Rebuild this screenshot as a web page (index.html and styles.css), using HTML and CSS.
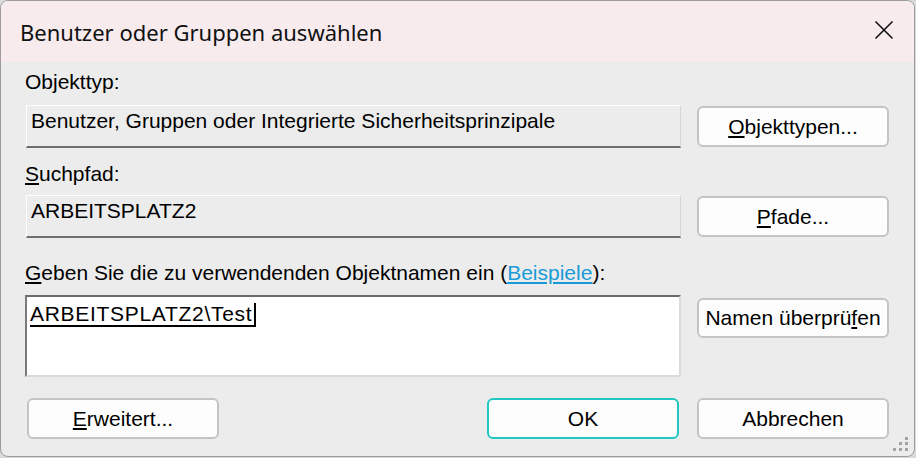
FILE: index.html
```html
<!DOCTYPE html>
<html lang="de">
<head>
<meta charset="utf-8">
<title>Benutzer oder Gruppen auswählen</title>
<link rel="stylesheet" href="styles.css">
</head>
<body>
<div class="window">
  <div class="titlebar">
    <span class="title">Benutzer oder Gruppen auswählen</span>
    <span class="close">
      <svg width="20" height="20" viewBox="0 0 20 20"><path d="M1.5 1.5 L18.5 18.5 M18.5 1.5 L1.5 18.5" stroke="#111" stroke-width="1.6" fill="none"/></svg>
    </span>
  </div>
  <div class="content">
    <div class="label l1">Objekttyp:</div>
    <div class="row r1">
      <div class="field">Benutzer, Gruppen oder Integrierte Sicherheitsprinzipale</div>
      <button class="btn"><u>O</u>bjekttypen...</button>
    </div>
    <div class="label l2"><u>S</u>uchpfad:</div>
    <div class="row r2">
      <div class="field">ARBEITSPLATZ2</div>
      <button class="btn"><u>P</u>fade...</button>
    </div>
    <div class="label l3"><u>G</u>eben Sie die zu verwendenden Objektnamen ein (<span class="link">Beispiele</span>):</div>
    <div class="row r3">
      <div class="names"><span class="name">ARBEITSPLATZ2\Test</span></div>
      <button class="btn btn-check">Namen überprü<u>f</u>en</button>
    </div>
    <div class="row footer">
      <div class="footer-left">
        <button class="btn btn-adv"><u>E</u>rweitert...</button>
        <button class="btn btn-ok">OK</button>
      </div>
      <button class="btn">Abbrechen</button>
    </div>
  </div>
  <div class="grip">
    <i class="d1"></i><i class="d2"></i><i class="d3"></i><i class="d4"></i><i class="d5"></i><i class="d6"></i>
  </div>
</div>
</body>
</html>
```
FILE: styles.css
```css
html, body {
  margin: 0;
  padding: 0;
  background: #d9d9d9;
}
.window {
  position: relative;
  width: 915px;
  height: 457px;
  box-sizing: border-box;
  border: 1px solid #9c9c9c;
  border-radius: 8px;
  background: #ececec;
  overflow: hidden;
  font-family: "Liberation Sans", Arial, sans-serif;
  font-size: 21px;
  color: #000;
}
.titlebar {
  height: 61px;
  background: #f7ebee;
  display: flex;
  align-items: center;
  justify-content: space-between;
  padding: 0 20px 0 19px;
}
.title {
  font-family: "Noto Sans", sans-serif;
  font-size: 22px;
  color: #111;
  margin-top: 1px;
}
.close {
  display: flex;
  width: 20px;
  height: 20px;
  margin-top: -3px;
}
.content {
  padding: 8px 25px 0 24px;
}
.label {
  line-height: 24px;
  height: 24px;
  white-space: nowrap;
}
.l2 { margin-top: 14px; }
.l3 { margin-top: 23px; }
.link {
  color: #1a9bd7;
  text-decoration: underline;
}
.row {
  display: grid;
  grid-template-columns: 656px 192px;
  column-gap: 16px;
  align-items: center;
}
.r1 { margin-top: 11px; }
.r2 { margin-top: 9px; }
.r3 { margin-top: 10px; align-items: start; }
.field {
  box-sizing: border-box;
  height: 43px;
  margin-left: 1px;
  border-top: 1px solid #ffffff;
  border-left: 1px solid #ffffff;
  border-right: 1px solid #d6d6d6;
  border-bottom: 2px solid #6e6e6e;
  background: #ececec;
  padding: 3px 0 0 4px;
  line-height: 24px;
  white-space: nowrap;
}
.btn {
  box-sizing: border-box;
  height: 41px;
  width: 192px;
  margin: 0;
  padding: 0;
  border: 2px solid #c4c4c4;
  border-radius: 6px;
  background: #fdfdfd;
  font-family: "Liberation Sans", Arial, sans-serif;
  font-size: 21px;
  color: #000;
  line-height: 24px;
  text-align: center;
}
.names {
  box-sizing: border-box;
  height: 82px;
  border-top: 2px solid #6a6a6a;
  border-left: 2px solid #7a7a7a;
  border-right: 2px solid #dadada;
  border-bottom: 2px solid #dadada;
  background: #ffffff;
  padding: 5px 0 0 3px;
}
.name {
  display: inline-block;
  line-height: 22px;
  border-bottom: 2px solid #000;
  border-right: 2px solid #000;
  padding-right: 2px;
  letter-spacing: 0.7px;
}
.btn-check {
  margin-top: 3px;
  height: 40px;
}
.footer {
  margin-top: 21px;
}
.footer-left {
  display: flex;
  justify-content: space-between;
  padding: 0 2px;
}
.btn-ok {
  border-color: #22c8c0;
}
.grip {
  position: absolute;
  right: 0;
  bottom: 0;
  width: 20px;
  height: 20px;
}
.grip i {
  position: absolute;
  width: 3px;
  height: 3px;
  background: #a3a3a3;
}
.grip .d1 { left: 11px; top: 1px; }
.grip .d2 { left: 5px; top: 6px; }
.grip .d3 { left: 11px; top: 6px; }
.grip .d4 { left: -1px; top: 12px; }
.grip .d5 { left: 5px; top: 12px; }
.grip .d6 { left: 11px; top: 12px; }
```
